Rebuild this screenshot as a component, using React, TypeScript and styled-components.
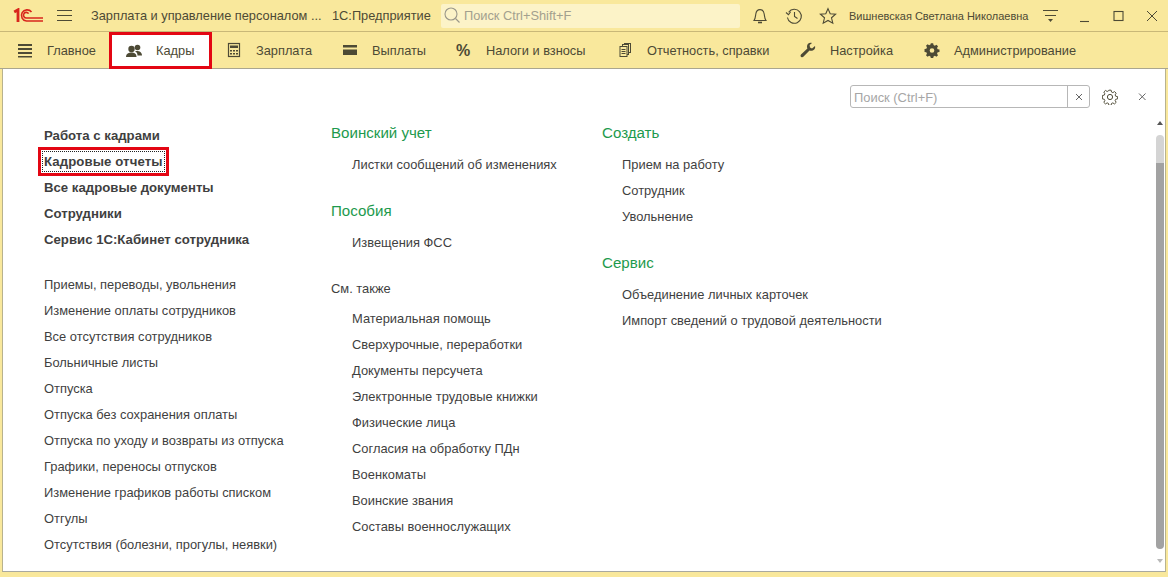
import React from "react";
import styled, { createGlobalStyle } from "styled-components";

const Global = createGlobalStyle`
  html, body { margin: 0; padding: 0; background: #f9e89c; }
  body { font-family: "Liberation Sans", Arial, sans-serif; color: #3c3c3c; overflow: hidden; }
  * { box-sizing: border-box; }
`;

const Windowed = styled.div`
  width: 1168px; height: 577px; display: flex; flex-direction: column; background: #f9e89c;
`;
const TitleBar = styled.div`
  height: 32px; display: flex; align-items: center; border-bottom: 1px solid #c9b878; flex: none;
`;
const Logo = styled.svg`
  width: 31px; height: 15px; margin-left: 13px; flex: none;
`;
const Burger = styled.svg`
  width: 16px; height: 14px; margin-left: 13px; flex: none;
`;
const AppTitle = styled.div`
  margin-left: 18px; font-size: 12.8px; color: #4d4a35; white-space: nowrap; width: 241px;
`;
const Platform = styled.div`
  font-size: 12.8px; color: #4d4a35; white-space: nowrap; width: 109px;
`;
const GlobalSearch = styled.div`
  width: 299px; height: 24px; background: #fcf3c8; border-radius: 2px; display: flex; align-items: center;
  padding-left: 3px; gap: 3px; font-size: 12.8px; color: #a3a08e; flex: none;
`;
const TitleIcon = styled.svg<{ $ml: number }>`
  width: 18px; height: 18px; margin-left: ${(p) => p.$ml}px; flex: none;
`;
const UserName = styled.div`
  margin-left: 12px; font-size: 11px; color: #4d4a35; white-space: nowrap; width: 180px;
`;
const SectionBar = styled.div`
  height: 37px; display: flex; align-items: stretch; flex: none; border-bottom: 1px solid #aaa68f; padding-left: 9px;
`;
const Section = styled.div<{ $w: number; $active?: boolean }>`
  width: ${(p) => p.$w}px; display: flex; align-items: center; gap: 14px; padding-left: ${(p) => (p.$active ? 17 : 8)}px;
  font-size: 12.8px; color: #4d4a35; white-space: nowrap; flex: none;
  ${(p) => p.$active ? "background:#fff; outline: 3px solid #e30613; outline-offset: -3px; height: 37px; margin-right: 6px;" : ""}
`;
const SectionIcon = styled.svg`
  width: 16px; height: 16px; flex: none;
`;
const Content = styled.div`
  position: relative; flex: 1; background: #fff; margin: 0 2px 5px 2px; border-left: 1px solid #b8b28e; border-right: 1px solid #b8b28e; border-bottom: 1px solid #a9a9a0;
  display: flex; flex-direction: column;
`;
const PanelTop = styled.div`
  height: 39px; padding-top: 16px; display: flex; justify-content: flex-end; align-items: flex-start; padding-right: 14px; flex: none;
`;
const PanelSearch = styled.div`
  width: 240px; height: 23px; border: 1px solid #b7b7b7; border-radius: 3px; display: flex; font-size: 12.9px; color: #a6a6a6; overflow: hidden;
`;
const PanelSearchInput = styled.div`
  flex: 1; padding-left: 3px; line-height: 23px; border-right: 1px solid #b7b7b7;
`;
const PanelSearchClear = styled.div`
  width: 21px; display: flex; align-items: center; justify-content: center;
`;
const PanelIcon = styled.svg<{ $ml: number }>`
  width: 16px; height: 16px; margin-left: ${(p) => p.$ml}px; margin-top: 4px; flex: none;
`;
const Columns = styled.div`
  display: flex; padding-left: 41px; padding-top: 15px;
`;
const Column = styled.div<{ $w: number }>`
  width: ${(p) => p.$w}px; display: flex; flex-direction: column; flex: none;
`;
const LinkGroup = styled.div<{ $mt?: number }>`
  display: flex; flex-direction: column; margin-top: ${(p) => p.$mt ?? 0}px;
`;
const Lead = styled.div`
  height: 26px; line-height: 26px; font-size: 13.2px; font-weight: bold; color: #3f3f3f; white-space: nowrap;
`;
const Focused = styled.span`
  position: relative; outline: 1px dotted #222; outline-offset: -1px; padding: 0 2px; margin: 2px 0 0 -2px;
  display: inline-block; height: 21px; line-height: 21px; vertical-align: top; letter-spacing: .1px;
  &::after { content: ""; position: absolute; left: -4px; right: -4px; top: -4px; bottom: -4px; border: 3px solid #e30613; }
`;
const Item = styled.div`
  height: 26px; line-height: 26px; font-size: 12.9px; color: #3f3f3f; white-space: nowrap;
`;
const Indented = styled(Item)`
  padding-left: 21px;
`;
const ActionItem = styled(Item)`
  padding-left: 20px;
`;
const GroupTitle = styled.div<{ $mt: number }>`
  height: 28px; line-height: 28px; font-size: 15.1px; color: #1d9a4d; margin-top: ${(p) => p.$mt}px; margin-bottom: 5px; white-space: nowrap;
`;
const SeeAlso = styled.div`
  height: 26px; line-height: 26px; font-size: 12.9px; color: #3f3f3f; margin-top: 20px; margin-bottom: 4px;
`;
const Scroll = styled.div`
  position: absolute; right: 1px; top: 52px; width: 8px; display: flex; flex-direction: column; align-items: center;
`;
const Arrow = styled.div<{ $down?: boolean }>`
  width: 0; height: 0; border-left: 3.5px solid transparent; border-right: 3.5px solid transparent;
  ${(p) => (p.$down ? "border-top: 4px solid #b9b9b9;" : "border-bottom: 4px solid #555;")}
  flex: none;
`;
const ThumbLight = styled.div`
  width: 8px; height: 28px; margin-top: 10px; background: #d4d4d4; border-radius: 4px 4px 0 0; flex: none;
`;
const ThumbDark = styled.div`
  width: 8px; height: 386px; background: #a2a2a2; border-radius: 0 0 4px 4px; flex: none; margin-bottom: 10px;
`;

const main = ["Работа с кадрами", "FOCUS", "Все кадровые документы", "Сотрудники", "Сервис 1С:Кабинет сотрудника"];
const secondary = [
  "Приемы, переводы, увольнения", "Изменение оплаты сотрудников", "Все отсутствия сотрудников", "Больничные листы", "Отпуска",
  "Отпуска без сохранения оплаты", "Отпуска по уходу и возвраты из отпуска", "Графики, переносы отпусков",
  "Изменение графиков работы списком", "Отгулы", "Отсутствия (болезни, прогулы, неявки)",
];
const also = ["Материальная помощь", "Сверхурочные, переработки", "Документы персучета", "Электронные трудовые книжки", "Физические лица", "Согласия на обработку ПДн", "Военкоматы", "Воинские звания", "Составы военнослужащих"];

const C = "#4d4a35";

export default function App() {
  return (
    <Windowed>
      <Global />
      <TitleBar>
        <Logo viewBox="0 0 31 15" fill="none" stroke="#d8261c">
          <path d="M1.2 4 L5 1.8 V14" strokeWidth="2.8" />
          <path d="M18.5 4 A5.6 5.6 0 1 0 13.5 13 H30" strokeWidth="1.6" />
          <path d="M15.6 5.6 A2.8 2.8 0 1 0 13.5 10 H30" strokeWidth="1.6" />
        </Logo>
        <Burger viewBox="0 0 16 14" stroke={C} strokeWidth="1">
          <path d="M0 1.5H15M0 6.5H15M0 11.5H15" />
        </Burger>
        <AppTitle>Зарплата и управление персоналом ...</AppTitle>
        <Platform>1С:Предприятие</Platform>
        <GlobalSearch>
          <svg width="17" height="17" viewBox="0 0 17 17" fill="none" stroke="#9a978a" strokeWidth="1.1">
            <circle cx="7" cy="7" r="6" />
            <path d="M11.5 11.5 L15.5 15.5" />
          </svg>
          Поиск Ctrl+Shift+F
        </GlobalSearch>
        <TitleIcon $ml={11} viewBox="0 0 18 18" fill="none" stroke={C} strokeWidth="1.1">
          <path d="M3 13.5 C4.5 11.5 4.5 9 4.8 7 C5.2 4 7 2.6 9 2.6 C11 2.6 12.8 4 13.2 7 C13.5 9 13.5 11.5 15 13.5Z" />
          <path d="M7 15.5H11" strokeWidth="1.6" />
        </TitleIcon>
        <TitleIcon $ml={16} viewBox="0 0 18 18" fill="none" stroke={C} strokeWidth="1.1">
          <path d="M3.6 5.2 A7 7 0 1 1 2.4 10.5" />
          <path d="M1 5.5 L3.5 7.7 L5.6 4.8" />
          <path d="M9.5 5 V9.5 L12.5 11.5" />
        </TitleIcon>
        <TitleIcon $ml={16} viewBox="0 0 18 18" fill="none" stroke={C} strokeWidth="1.1">
          <path d="M9 1.6 L11.2 6.7 L16.6 7.2 L12.5 10.8 L13.8 16.2 L9 13.4 L4.2 16.2 L5.5 10.8 L1.4 7.2 L6.8 6.7Z" />
        </TitleIcon>
        <UserName>Вишневская Светлана Николаевна</UserName>
        <TitleIcon $ml={13} viewBox="0 0 18 18" fill="none" stroke={C}>
          <path d="M1 3.5H16M3 8.5H14" strokeWidth="1" />
          <path d="M6 12 H11 L8.5 15Z" fill={C} stroke="none" />
        </TitleIcon>
        <TitleIcon $ml={16} viewBox="0 0 18 18" fill="none" stroke={C}>
          <path d="M4 14.5H13" strokeWidth="1.1" />
        </TitleIcon>
        <TitleIcon $ml={15} viewBox="0 0 18 18" fill="none" stroke={C} strokeWidth="1.1">
          <rect x="5" y="4.5" width="9" height="9" />
        </TitleIcon>
        <TitleIcon $ml={16} viewBox="0 0 18 18" fill="none" stroke={C} strokeWidth="1">
          <path d="M4 4L14 14M14 4L4 14" />
        </TitleIcon>
      </TitleBar>
      <SectionBar>
        <Section $w={100}>
          <SectionIcon viewBox="0 0 16 16" fill={C}><path d="M1 2h14v2H1zM1 6h14v2H1zM1 10h14v2H1zM1 14h14v1.6H1z" /></SectionIcon>
          Главное
        </Section>
        <Section $w={103} $active>
          <SectionIcon viewBox="0 0 16 16" fill={C}>
            <circle cx="5.5" cy="6" r="3.2" /><circle cx="11.5" cy="4.5" r="2.8" />
            <path d="M0 14 C0 10.5 3 9.5 5.5 9.5 C8 9.5 10.5 10.5 10.5 14Z" /><path d="M9 8.3 C12 7.5 16 8.5 16 12.5 H11.5 C11.5 10.5 10.5 9 9 8.3Z" />
          </SectionIcon>
          Кадры
        </Section>
        <Section $w={116}>
          <SectionIcon viewBox="0 0 16 16" fill="none" stroke={C}>
            <rect x="2.5" y="1.5" width="11" height="13" strokeWidth="1.2"/><rect x="4" y="3.5" width="8" height="2.5" fill={C} stroke="none"/>
            <path d="M4 8h2v1.5H4zM7 8h2v1.5H7zM10 8h2v1.5h-2zM4 11h2v1.5H4zM7 11h2v1.5H7zM10 11h2v1.5h-2z" fill={C} stroke="none"/>
          </SectionIcon>
          Зарплата
        </Section>
        <Section $w={114}>
          <SectionIcon viewBox="0 0 16 16" fill={C}>
            <path d="M1 3h14v2.6H1zM1 7.6h14V13H1z" />
          </SectionIcon>
          Выплаты
        </Section>
        <Section $w={161}>
          <SectionIcon viewBox="0 0 16 16"><text x="0" y="13.5" fontSize="16" fontWeight="bold" fill={C} fontFamily="Liberation Sans">%</text></SectionIcon>
          Налоги и взносы
        </Section>
        <Section $w={183}>
          <SectionIcon viewBox="0 0 16 16" fill="#f9e89c" stroke={C} strokeWidth="1">
            <rect x="7.5" y="1.5" width="6" height="9"/><rect x="5.5" y="2.5" width="6" height="10"/><rect x="3" y="4.5" width="7" height="10"/>
            <path d="M4.5 7.5h4M4.5 9.5h4M4.5 11.5h4" />
          </SectionIcon>
          Отчетность, справки
        </Section>
        <Section $w={124}>
          <SectionIcon viewBox="0 0 16 16" fill={C}>
            <path d="M15 4 L12 6.5 L10 5.5 L9.6 3 L12 1 C9.5 .2 7 1.5 7 4.5 C7 5.5 7.2 6 7.4 6.5 L1 12.5 C.2 13.5 .5 14.5 1.2 15 C2 15.6 3 15.4 3.6 14.6 L9.5 8.5 C12.5 9.5 16 7.5 15 4Z"/>
          </SectionIcon>
          Настройка
        </Section>
        <Section $w={170}>
          <SectionIcon viewBox="0 0 16 16" fill={C}>
            <path fillRule="evenodd" d="M6.7 1h2.6l.4 2 1.5.7 1.7-1.1 1.8 1.8-1.1 1.7.7 1.5 2 .4v2.6l-2 .4-.7 1.5 1.1 1.7-1.8 1.8-1.7-1.1-1.5.7-.4 2H6.7l-.4-2-1.5-.7-1.7 1.1-1.8-1.8 1.1-1.7-.7-1.5-2-.4V7.4l2-.4.7-1.5-1.1-1.7 1.8-1.8 1.7 1.1 1.5-.7zM8 6.4a2.6 2.6 0 1 0 0 5.2 2.6 2.6 0 0 0 0-5.2z" transform="translate(.8 .4) scale(.9)"/>
          </SectionIcon>
          Администрирование
        </Section>
      </SectionBar>
      <Content>
        <PanelTop>
          <PanelSearch>
            <PanelSearchInput>Поиск (Ctrl+F)</PanelSearchInput>
            <PanelSearchClear>
              <svg width="8" height="8" viewBox="0 0 8 8" stroke="#666"><path d="M1 1L7 7M7 1L1 7" /></svg>
            </PanelSearchClear>
          </PanelSearch>
          <PanelIcon $ml={12} viewBox="0 0 16 16" fill="none" stroke={C} strokeWidth="1">
            <path d="M6.8 .8h2.4l.4 2 1.4.6 1.8-1.1 1.7 1.7-1.1 1.8.6 1.4 2 .4v2.4l-2 .4-.6 1.4 1.1 1.8-1.7 1.7-1.8-1.1-1.4.6-.4 2H6.8l-.4-2-1.4-.6-1.8 1.1-1.7-1.7 1.1-1.8-.6-1.4-2-.4V6.4l2-.4.6-1.4-1.1-1.8 1.7-1.7 1.8 1.1 1.4-.6z" transform="translate(.4 .4) scale(.95)"/>
            <circle cx="8" cy="8" r="2.6" />
          </PanelIcon>
          <PanelIcon $ml={17} viewBox="0 0 16 16" stroke="#666"><path d="M4 4.5L10.5 11M10.5 4.5L4 11" /></PanelIcon>
        </PanelTop>
        <Columns>
          <Column $w={287}>
            <LinkGroup>
              {main.map((t) => t === "FOCUS" ? <Lead key={t}><Focused>Кадровые отчеты</Focused></Lead> : <Lead key={t}>{t}</Lead>)}
            </LinkGroup>
            <LinkGroup $mt={19}>
              {secondary.map((t) => <Item key={t}>{t}</Item>)}
            </LinkGroup>
          </Column>
          <Column $w={271}>
            <GroupTitle $mt={-4}>Воинский учет</GroupTitle>
            <Indented>Листки сообщений об изменениях</Indented>
            <GroupTitle $mt={19}>Пособия</GroupTitle>
            <Indented>Извещения ФСС</Indented>
            <SeeAlso>См. также</SeeAlso>
            {also.map((t) => <Indented key={t}>{t}</Indented>)}
          </Column>
          <Column $w={400}>
            <GroupTitle $mt={-4}>Создать</GroupTitle>
            <ActionItem>Прием на работу</ActionItem>
            <ActionItem>Сотрудник</ActionItem>
            <ActionItem>Увольнение</ActionItem>
            <GroupTitle $mt={19}>Сервис</GroupTitle>
            <ActionItem>Объединение личных карточек</ActionItem>
            <ActionItem>Импорт сведений о трудовой деятельности</ActionItem>
          </Column>
        </Columns>
        <Scroll>
          <Arrow />
          <ThumbLight />
          <ThumbDark />
          <Arrow $down />
        </Scroll>
      </Content>
    </Windowed>
  );
}
